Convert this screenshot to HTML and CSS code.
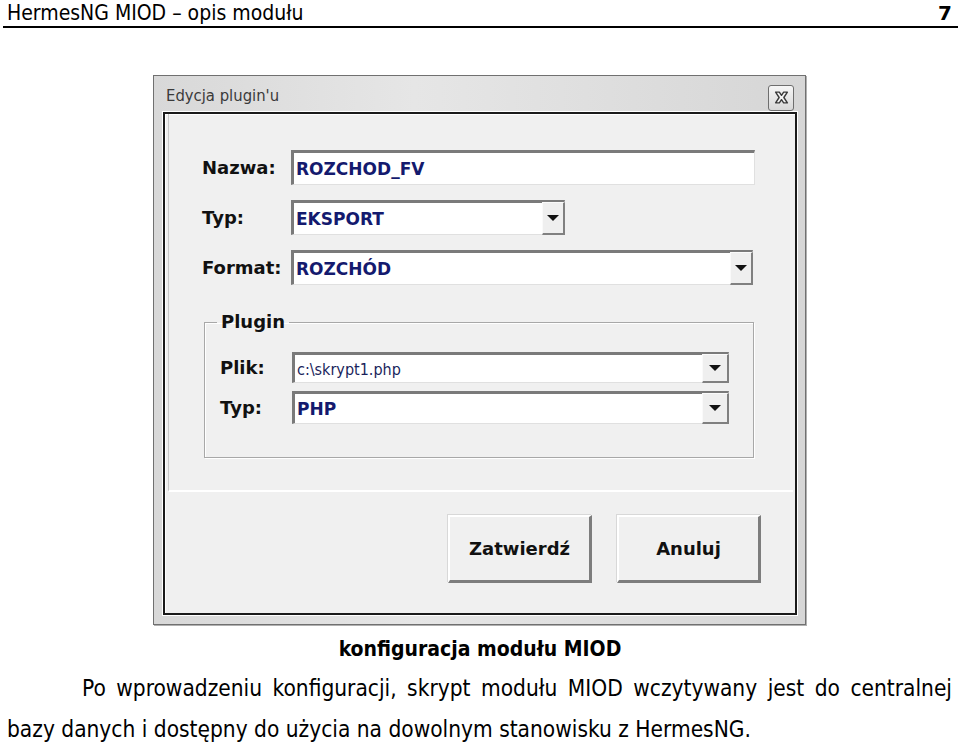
FILE: index.html
```html
<!DOCTYPE html>
<html lang="pl">
<head>
<meta charset="utf-8">
<title>HermesNG MIOD – opis modułu</title>
<link rel="stylesheet" href="styles.css">
</head>
<body>
<div class="page">
  <header class="doc-header">
    <span class="doc-title">HermesNG MIOD – opis modułu</span>
    <span class="page-no">7</span>
  </header>

  <div class="figure">
    <div class="dialog">
      <div class="titlebar">
        <span class="title">Edycja plugin'u</span>
        <span class="close">
          <svg width="15" height="13" viewBox="0 0 14 12"><path d="M1.5 1h3.5l2 3 2-3h3.5l-3.3 5 3.3 5H9L7 8l-2 3H1.5l3.3-5z" fill="#f4f4f4" stroke="#3a3a3a" stroke-width="1.3" stroke-linejoin="round"/></svg>
        </span>
      </div>
      <div class="panel">
        <div class="upper">
          <div class="row">
            <span class="label">Nazwa:</span>
            <span class="field w-name"><span class="val">ROZCHOD_FV</span></span>
          </div>
          <div class="row">
            <span class="label">Typ:</span>
            <span class="field combo w-typ"><span class="val">EKSPORT</span><span class="arrow"></span></span>
          </div>
          <div class="row">
            <span class="label">Format:</span>
            <span class="field combo w-format"><span class="val">ROZCHÓD</span><span class="arrow"></span></span>
          </div>
          <fieldset class="group">
            <legend class="legend">Plugin</legend>
            <div class="grow">
              <span class="label">Plik:</span>
              <span class="field combo small w-plik"><span class="val thin">c:\skrypt1.php</span><span class="arrow"></span></span>
            </div>
            <div class="grow tall">
              <span class="label">Typ:</span>
              <span class="field combo small w-plik"><span class="val">PHP</span><span class="arrow"></span></span>
            </div>
          </fieldset>
        </div>
        <div class="buttons">
          <span class="btn">Zatwierdź</span>
          <span class="btn">Anuluj</span>
        </div>
      </div>
    </div>
  </div>

  <p class="caption">konfiguracja modułu MIOD</p>
  <p class="text">Po wprowadzeniu konfiguracji, skrypt modułu MIOD wczytywany jest do centralnej bazy danych i dostępny do użycia na dowolnym stanowisku z HermesNG.</p>
</div>
</body>
</html>
```

FILE: styles.css
```css
html, body {
  margin: 0;
  padding: 0;
  background: #ffffff;
}
.page {
  width: 960px;
  height: 744px;
  overflow: hidden;
  font-family: "DejaVu Sans Condensed", "DejaVu Sans", sans-serif;
  color: #000;
}
.doc-header {
  display: flex;
  justify-content: space-between;
  align-items: flex-end;
  margin: 0 2px 0 3px;
  padding: 0 6px 0 4px;
  height: 26px;
  border-bottom: 2px solid #000;
  font-size: 21px;
  line-height: 26px;
}
.page-no {
  font-weight: bold;
  font-family: "DejaVu Sans", sans-serif;
  font-size: 20px;
}
.figure {
  padding: 47px 0 0 153px;
}
.dialog {
  box-sizing: border-box;
  width: 653px;
  height: 550px;
  border: 1px solid #707070;
  background: linear-gradient(90deg, #d8d8d8 0%, #e6e6e6 40%, #d6d6d6 100%);
  box-shadow: 1px 1px 0 #b0b0b0;
  display: flex;
  flex-direction: column;
  padding: 0 8px 9px 9px;
}
.titlebar {
  height: 36px;
  display: flex;
  align-items: center;
  justify-content: space-between;
  padding: 0 2px 0 3px;
  flex: none;
}
.title {
  font-family: "DejaVu Sans Condensed", sans-serif;
  font-size: 16.5px;
  color: #3a3a3a;
  padding-top: 3px;
}
.close {
  width: 24px;
  height: 24px;
  border: 1px solid #6e6e6e;
  border-radius: 3px;
  background: linear-gradient(#f6f6f6, #d8d8d8);
  display: flex;
  align-items: center;
  justify-content: center;
  margin-top: 7px;
  margin-right: 1px;
}
.panel {
  flex: 1;
  border: 2px solid #1a1a1a;
  outline: 1px solid #ffffff;
  background: #f0f0f0;
  display: flex;
  flex-direction: column;
  box-shadow: inset 1px 1px 0 #ffffff;
}
.upper {
  margin: 0 2px 0 3px;
  padding: 36px 0 0 33px;
  height: 340px;
  border-left: 1px solid #c8c8c8;
  border-bottom: 2px solid #ffffff;
  display: flex;
  flex-direction: column;
  gap: 15px;
}
.row {
  display: flex;
  align-items: center;
  height: 35px;
}
.label {
  font-family: "DejaVu Sans", sans-serif;
  font-weight: bold;
  font-size: 18px;
  color: #111;
  width: 89px;
  flex: none;
}
.field {
  display: flex;
  align-items: center;
  justify-content: space-between;
  height: 100%;
  box-sizing: border-box;
  background: #fff;
  border-top: 3px solid #7a7a7a;
  border-left: 3px solid #7a7a7a;
  border-right: 1px solid #e0e0e0;
  border-bottom: 1px solid #e0e0e0;
}
.w-name { width: 464px; }
.w-typ { width: 274px; }
.w-format { width: 462px; }
.val {
  font-family: "DejaVu Sans", sans-serif;
  font-weight: bold;
  font-size: 17px;
  color: #141a6e;
  padding-left: 2px;
  padding-top: 1px;
}
.val.thin {
  font-family: "DejaVu Sans Condensed", sans-serif;
  font-weight: normal;
  font-size: 16px;
  color: #1a1f5c;
}
.arrow {
  width: 23px;
  height: calc(100% + 2px);
  margin: -1px -1px -1px 0;
  box-sizing: border-box;
  background: #efefef;
  border-top: 1px solid #fafafa;
  border-left: 1px solid #fafafa;
  border-right: 2px solid #808080;
  border-bottom: 2px solid #808080;
  display: flex;
  align-items: center;
  justify-content: center;
}
.arrow::before {
  content: "";
  border-left: 6px solid transparent;
  border-right: 6px solid transparent;
  border-top: 6px solid #111;
}
.group {
  margin: 12px 0 0 2px;
  padding: 20px 24px 0 15px;
  width: 549px;
  height: 146px;
  box-sizing: border-box;
  border: 1px solid #a8a8a8;
  box-shadow: 1px 1px 0 #fff inset, 1px 1px 0 #fff;
  display: flex;
  flex-direction: column;
  gap: 8px;
}
.legend {
  font-family: "DejaVu Sans", sans-serif;
  font-weight: bold;
  font-size: 18px;
  color: #111;
  padding: 0 4px;
  margin-left: -3px;
  line-height: 20px;
}
.grow {
  display: flex;
  align-items: center;
  height: 31px;
}
.grow.tall {
  height: 33px;
}
.grow .label {
  width: 72px;
}
.w-plik { width: 437px; }
.combo.small .arrow { width: 27px; }
.buttons {
  display: flex;
  justify-content: flex-end;
  gap: 25px;
  padding: 23px 34px 0 0;
}
.btn {
  width: 144px;
  height: 68px;
  box-sizing: border-box;
  display: flex;
  align-items: center;
  justify-content: center;
  background: #f0f0f0;
  border-top: 2px solid #ffffff;
  border-left: 2px solid #ffffff;
  border-right: 3px solid #7d7d7d;
  border-bottom: 3px solid #7d7d7d;
  box-shadow: -1px -1px 0 #d8d8d8;
  font-family: "DejaVu Sans", sans-serif;
  font-weight: bold;
  font-size: 18px;
  color: #111;
}
.caption {
  margin: 11px 0 0;
  text-align: center;
  font-weight: bold;
  font-size: 21px;
  line-height: 26px;
}
.text {
  margin: 6px 8px 0 7px;
  font-size: 22.5px;
  line-height: 41px;
  text-align: justify;
  text-indent: 75px;
}
```
